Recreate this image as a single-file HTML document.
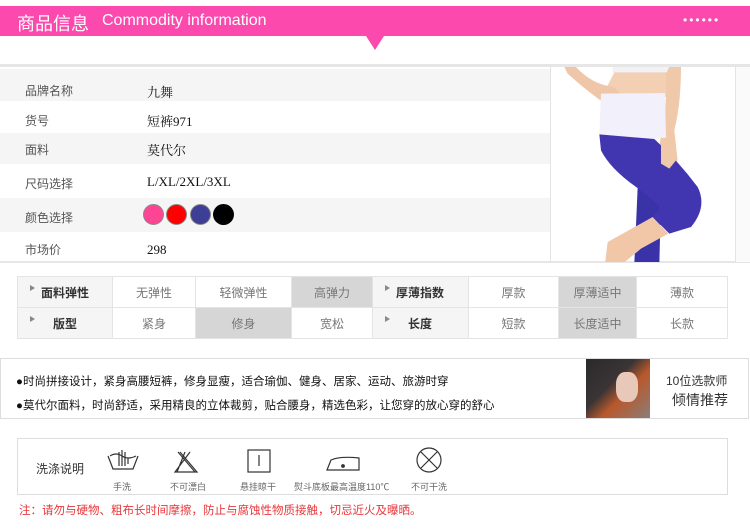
<!DOCTYPE html>
<html><head><meta charset="utf-8"><style>
*{margin:0;padding:0;box-sizing:border-box}
body{width:750px;height:530px;background:#fff;position:relative;overflow:hidden;font-family:"Liberation Sans","Noto Sans CJK SC",sans-serif;color:#333}
.a{position:absolute}
.hdr{left:0;top:6px;width:750px;height:30px;background:#fb49ad}
.row{left:0;width:550px;height:33px}
.g{background:#f5f5f5}
.lb{left:25px;font-size:12px;color:#555}
.vl{left:147px;font-size:13px;color:#111;font-family:"Liberation Serif","Noto Serif CJK SC",serif}
table{border-collapse:collapse;font-size:12px;color:#777}
td{border:1px solid #e4e4e4;text-align:center;height:31px}
td.h{background:#f5f5f5;color:#333;font-weight:bold;font-size:12px;text-align:left;position:relative}
td.s{background:#d6d6d6}
td.h:before{content:"";position:absolute;left:12px;top:8px;border-left:5px solid #888;border-top:3px solid transparent;border-bottom:3px solid transparent}
.ic{stroke:#333;fill:none;stroke-width:1.2}
.wl{font-size:9px;color:#666;top:480px}
</style></head><body>
<div class="a hdr"></div>
<div class="a" style="left:17px;top:10px;font-size:18px;color:#fff">商品信息</div>
<div class="a" style="left:102px;top:12px;font-size:16px;color:#fff">Commodity information</div>
<div class="a" style="left:683px;top:13px;font-size:12px;color:#fff;letter-spacing:2px">••••••</div>
<div class="a" style="left:366px;top:36px;border-top:14px solid #fb49ad;border-left:9px solid transparent;border-right:9px solid transparent"></div>
<div class="a" style="left:0;top:64px;width:750px;height:3px;background:#e6e6e6"></div>
<div class="a row g" style="top:69px;height:32px"></div>
<div class="a row g" style="top:133px;height:31px"></div>
<div class="a row g" style="top:198px;height:34px"></div>
<div class="a" style="left:0;top:261px;width:750px;height:2px;background:#e6e6e6"></div>
<div class="a" style="left:735px;top:67px;width:15px;height:195px;background:#fafafa;border-left:1px solid #e4e4e4"></div>
<div class="a lb" style="top:82px">品牌名称</div><div class="a vl" style="top:82px">九舞</div>
<div class="a lb" style="top:112px">货号</div><div class="a vl" style="top:111px">短裤971</div>
<div class="a lb" style="top:141px">面料</div><div class="a vl" style="top:140px">莫代尔</div>
<div class="a lb" style="top:175px">尺码选择</div><div class="a vl" style="top:174px">L/XL/2XL/3XL</div>
<div class="a lb" style="top:209px">颜色选择</div>
<div class="a" style="left:143px;top:204px;width:21px;height:21px;border-radius:50%;background:#fd4594;border:1px solid #888"></div>
<div class="a" style="left:166px;top:204px;width:21px;height:21px;border-radius:50%;background:#f00;border:1px solid #888"></div>
<div class="a" style="left:190px;top:204px;width:21px;height:21px;border-radius:50%;background:#3e3e96;border:1px solid #888"></div>
<div class="a" style="left:213px;top:204px;width:21px;height:21px;border-radius:50%;background:#000"></div>
<div class="a lb" style="top:241px">市场价</div><div class="a vl" style="top:242px">298</div>
<div class="a" style="left:550px;top:67px;width:185px;height:195px;border-left:1px solid #e4e4e4;overflow:hidden">
<svg width="185" height="195" viewBox="30 20 555 585" style="display:block">
<path d="M215 18 H385 V38 H215 Z" fill="#f1f1f6"/>
<path d="M220 36 H388 L375 110 H182 Z" fill="#f3cfb3"/>
<path d="M70 20 L105 20 Q150 70 215 80 Q245 95 240 130 L200 135 Q140 95 80 40 Z" fill="#efc6a8"/>
<path d="M385 20 L420 20 Q420 130 400 210 L410 300 L380 325 L350 300 L360 220 Q380 130 375 40 Z" fill="#f0c9ab"/>
<path d="M180 100 L372 98 L375 232 L340 236 L175 222 Z" fill="#f2f0fa"/>
<path d="M290 380 L360 420 L355 610 L280 610 Z" fill="#3a33a8"/>
<path d="M335 470 L382 520 L300 565 L245 610 L192 610 L200 545 Z" fill="#f1c7a8"/>
<path d="M175 222 L340 236 Q410 300 470 380 Q500 440 450 500 L385 520 L335 470 L360 440 L300 390 Q210 330 180 270 Z" fill="#4236b0"/>
<path d="M360 230 Q395 260 405 300 L385 325 L360 310 Z" fill="#f0c9ab"/>
</svg></div>
<table class="a" style="left:17px;top:276px;width:711px">
<tr><td class="h" style="width:95px;padding-left:23px">面料弹性</td><td style="width:83px">无弹性</td><td style="width:96px">轻微弹性</td><td class="s" style="width:81px">高弹力</td><td class="h" style="width:96px;padding-left:23px">厚薄指数</td><td style="width:90px">厚款</td><td class="s" style="width:78px">厚薄适中</td><td>薄款</td></tr>
<tr><td class="h" style="padding-left:35px">版型</td><td>紧身</td><td class="s">修身</td><td>宽松</td><td class="h" style="padding-left:35px">长度</td><td>短款</td><td class="s">长度适中</td><td>长款</td></tr>
</table>
<div class="a" style="left:0;top:358px;width:749px;height:61px;border:1px solid #ddd"></div>
<div class="a" style="left:16px;top:373px;font-size:11.5px;color:#111">●时尚拼接设计，紧身高腰短裤，修身显瘦，适合瑜伽、健身、居家、运动、旅游时穿</div>
<div class="a" style="left:16px;top:397px;font-size:11.5px;color:#111">●莫代尔面料，时尚舒适，采用精良的立体裁剪，贴合腰身，精选色彩，让您穿的放心穿的舒心</div>
<div class="a" style="left:586px;top:359px;width:64px;height:59px;background:linear-gradient(135deg,#2a2a2a 0%,#3a3436 40%,#b8582c 60%,#8a7e78 100%)"></div>
<div class="a" style="left:616px;top:372px;width:22px;height:30px;border-radius:40%;background:#e8c8b8"></div>
<div class="a" style="left:666px;top:372px;font-size:12px;color:#333">10位选款师</div>
<div class="a" style="left:672px;top:390px;font-size:14px;color:#333">倾情推荐</div>
<div class="a" style="left:17px;top:438px;width:711px;height:57px;border:1px solid #ddd"></div>
<div class="a" style="left:36px;top:460px;font-size:12px;color:#333">洗涤说明</div>
<svg class="a" style="left:105px;top:446px" width="350" height="30">
<g class="ic"><path d="M3 10 L8 23 H28 L33 10"/><path d="M5 10 Q11 6 17 10 Q23 14 31 10"/><path d="M14 20 V6 M17 20 V4 M20 20 V6 M23 18 V12"/>
<path d="M75 6 L92 26 H70 L85 6 M73 6 L90 26 H75 M80 6 L72 26"/>
<rect x="143" y="4" width="22" height="22"/><path d="M154 9 V20"/>
<path d="M222 24 L226 14 Q235 10 254 12 V24 Z"/><circle cx="238" cy="20" r="1.3" fill="#333"/>
<circle cx="324" cy="14" r="12"/><path d="M316 6 L332 22 M332 6 L316 22"/></g></svg>
<div class="a wl" style="left:113px">手洗</div>
<div class="a wl" style="left:170px">不可漂白</div>
<div class="a wl" style="left:240px">悬挂晾干</div>
<div class="a wl" style="left:294px">熨斗底板最高温度110℃</div>
<div class="a wl" style="left:411px">不可干洗</div>
<div class="a" style="left:19px;top:502px;font-size:11.5px;color:#e8363a">注：请勿与硬物、粗布长时间摩擦，防止与腐蚀性物质接触，切忌近火及曝晒。</div>
</body></html>
